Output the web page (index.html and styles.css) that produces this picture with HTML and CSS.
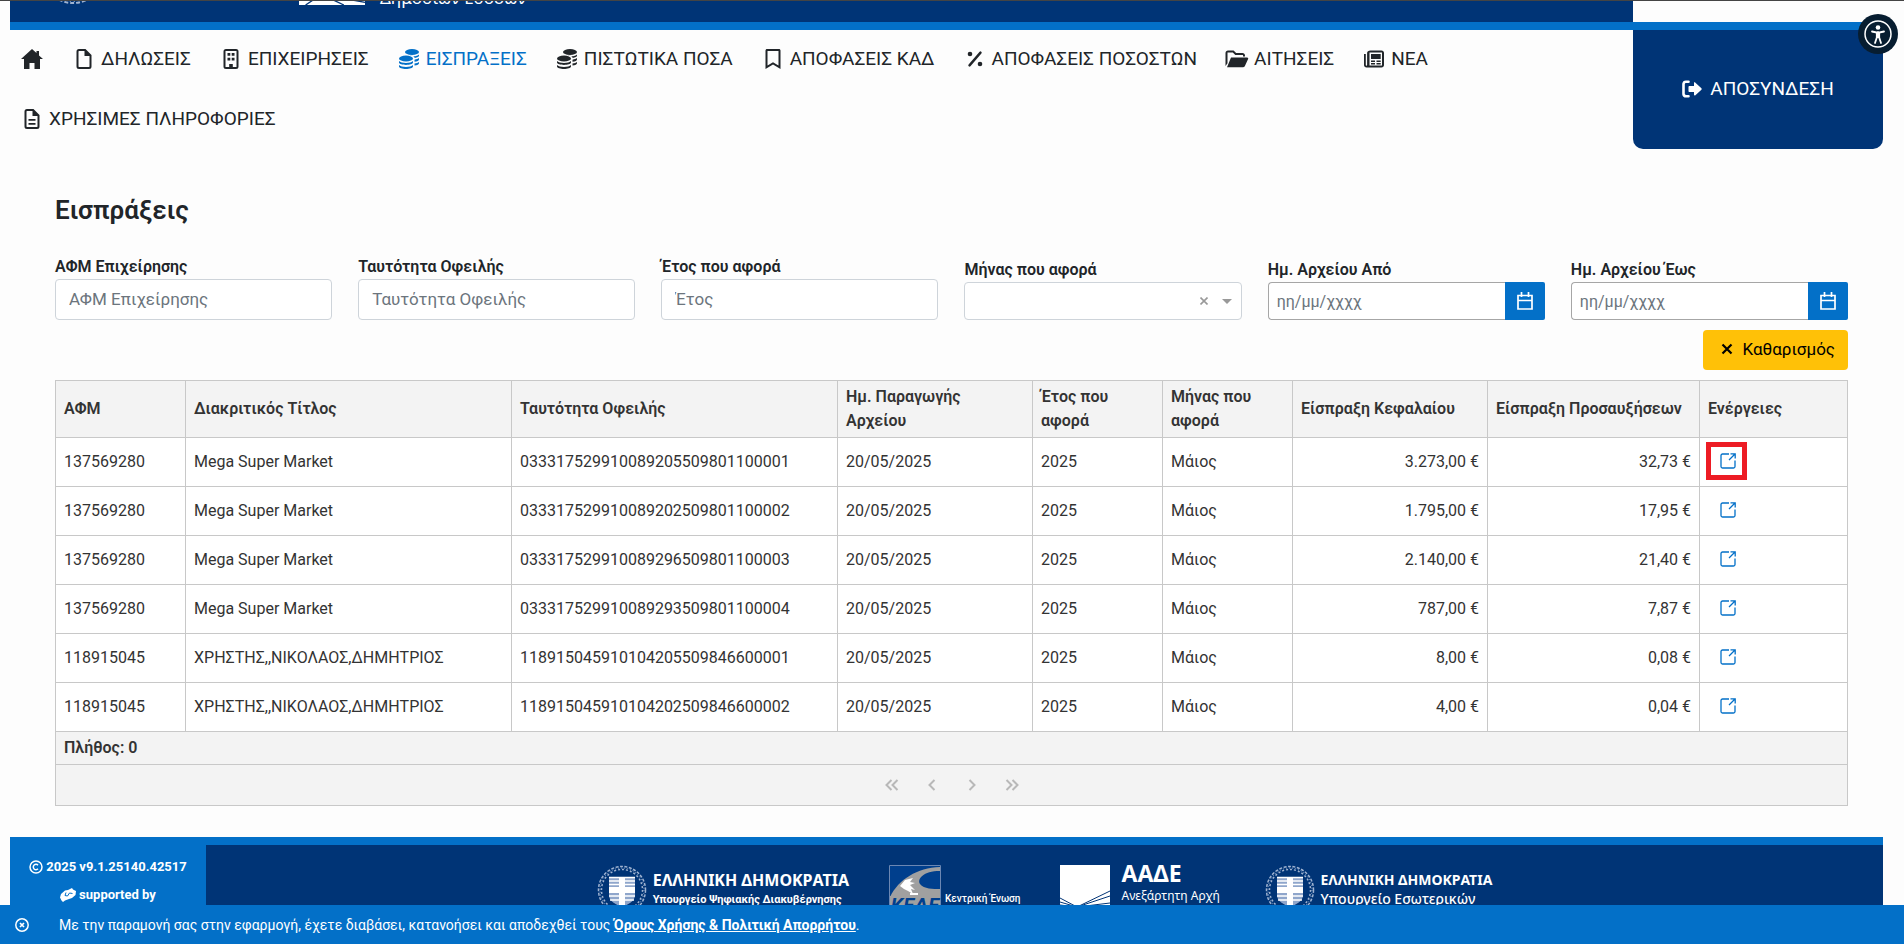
FILE: index.html
```
<!DOCTYPE html>
<html lang="el">
<head>
  <meta charset="utf-8">
  <title>Εισπράξεις</title>
  <link rel="stylesheet" href="styles.css">
</head>
<body>
  <!-- icons -->
  <svg class="sprite" width="0" height="0" aria-hidden="true">
    <symbol id="i-home" viewBox="0 0 22 20"><path d="M11 0 0 10h3v10h5.500v-6h5v6H19V10h3l-4-3.600V2h-2.500v2z"/></symbol>
    <symbol id="i-file" viewBox="0 0 15 20"><path fill-rule="evenodd" d="M2.500 0H9l6 6v11.500a2.500 2.500 0 0 1-2.500 2.500h-10A2.500 2.500 0 0 1 0 17.500v-15A2.500 2.500 0 0 1 2.500 0zM2 2.500v15c0 .3.200.5.500.5h10c.3 0 .5-.2.500-.5V7H8V2H2.500c-.3 0-.5.200-.5.500z"/></symbol>
    <symbol id="i-lines" viewBox="0 0 15 20"><path fill-rule="evenodd" d="M2.500 0H9l6 6v11.500a2.500 2.500 0 0 1-2.500 2.500h-10A2.500 2.500 0 0 1 0 17.500v-15A2.500 2.500 0 0 1 2.500 0zM2 2.500v15c0 .3.200.5.500.5h10c.3 0 .5-.2.500-.5V7H8V2H2.500c-.3 0-.5.200-.5.500zM4 10h7v1.800H4zM4 14h7v1.800H4z"/></symbol>
    <symbol id="i-building" viewBox="0 0 15 20"><path fill-rule="evenodd" d="M2.500 0h10A2.500 2.500 0 0 1 15 2.500v15a2.500 2.500 0 0 1-2.500 2.500h-10A2.500 2.500 0 0 1 0 17.500v-15A2.500 2.500 0 0 1 2.500 0zM2 2v16h3.700v-3h3.600v3H13V2zM4 4h2.800v2.800H4zM8.200 4H11v2.800H8.200zM4 8.800h2.800v2.800H4zM8.200 8.800H11v2.800H8.200z"/></symbol>
    <symbol id="i-coins" viewBox="0 0 20 20"><ellipse cx="13" cy="3" rx="7" ry="3"/><ellipse cx="7" cy="9.500" rx="7" ry="3"/><path d="M0 12c2 2.600 12 2.600 14 0v1.500c0 3.200-14 3.200-14 0zM0 16c2 2.600 12 2.600 14 0v1.500c0 3.300-14 3.300-14 0zM7 5.600c3 0 6 .7 7.300 1.700C17 7 19 6.500 20 5.400v1.400c0 1-1.700 1.900-4.200 2.200C15 7 11 5.800 7 5.600zM15.500 10.700c2-.3 3.600-.8 4.500-1.600v1.400c0 1-1.700 2-4.500 2.300zM15.500 14.500c2-.3 3.600-.8 4.500-1.600v1.400c0 1-1.700 2-4.500 2.300z"/></symbol>
    <symbol id="i-bookmark" viewBox="0 0 15 20"><path fill-rule="evenodd" d="M1.500 0h12c.8 0 1.500.700 1.500 1.500V20l-7.500-4.500L0 20V1.500C0 .7.700 0 1.500 0zM2 2v14.500l5.500-3.300 5.500 3.300V2z"/></symbol>
    <symbol id="i-percent" viewBox="0 0 15 20"><path d="M13 3.600 2 16.400" fill="none" stroke="currentColor" stroke-width="2.400" stroke-linecap="round"/><circle cx="2.500" cy="5" r="2.300"/><circle cx="12.500" cy="15" r="2.300"/></symbol>
    <symbol id="i-folder" viewBox="0 0 23 20"><path d="M5.500 8.500h16c1 0 1.500.8 1.100 1.600l-3.200 7c-.3.800-.9 1.100-1.700 1.100H1.500z"/><path fill-rule="evenodd" d="M2.500 1.500h5.600l2.500 2.500H17c1.400 0 2.500 1 2.500 2.500v1h-2V6H9.800L7.300 3.500H2v10.800L0 17V4c0-1.400 1.100-2.500 2.500-2.500z"/></symbol>
    <symbol id="i-news" viewBox="0 0 20 20"><path fill-rule="evenodd" d="M6.500 1.500h11C19 1.500 20 2.600 20 4v12c0 1.400-1 2.500-2.500 2.500h-15C1 18.500 0 17.400 0 16V5h1.800v11c0 .9 1.300.9 1.300 0V4c0-1.400 1.300-2.500 3.400-2.500zM5.500 3.500v13H18v-13zM7 5h9.700v5H7zM7 11.500h4V13H7zM12.500 11.500h4.200V13h-4.200zM7 14h4v1.500H7zM12.500 14h4.200v1.500h-4.200z"/></symbol>
    <symbol id="i-exit" viewBox="0 0 20 20"><path d="M6.500 2.800H4A2.500 2.500 0 0 0 1.500 5v10A2.500 2.500 0 0 0 4 17.200h2.500" fill="none" stroke="currentColor" stroke-width="2.600" stroke-linecap="round"/><path d="M12 3.500c.5-.3 1-.2 1.400.2l6 5.500c.5.500.5 1.100 0 1.600l-6 5.500c-.6.500-1.400.2-1.400-.5V13H7.500c-.6 0-1-.4-1-1V8c0-.6.400-1 1-1H12z"/></symbol>
    <symbol id="i-calendar" viewBox="0 0 16 18"><path d="M1 3.500h14V17H1zM1 8.500h14M4.500 0v5M11.500 0v5" fill="none" stroke="currentColor" stroke-width="1.700"/></symbol>
    <symbol id="i-open" viewBox="0 0 16 16"><path d="M9 1H2.500A1.500 1.500 0 0 0 1 2.500v11A1.500 1.500 0 0 0 2.500 15h11a1.500 1.500 0 0 0 1.500-1.500V7.500M10.500.8h4.700v4.700M15 1 9 7" fill="none" stroke="currentColor" stroke-width="1.300"/></symbol>
    <symbol id="i-emblem" viewBox="0 0 50 50">
      <g fill="none" stroke="#9fb3d1" stroke-width="1.500"><circle cx="25" cy="25" r="23.500" stroke-dasharray="3 1.500"/><circle cx="25" cy="25" r="20.500" stroke-dasharray="2 2"/><circle cx="25" cy="25" r="22" stroke-width="1" stroke-dasharray="1 2"/></g>
      <path d="M12 12h26v18c0 7-8 9-13 13-5-4-13-6-13-13z" fill="#8fa6cb"/>
      <path d="M12 12.500h26M12 16h26M12 19.500h26M12 31h26M13 35h24" stroke="#fff" stroke-width="1.300"/>
      <path d="M22 12h6v10h10v6H28v14l-3 2-3-2V28H12v-6h10z" fill="#fff"/>
    </symbol>
    <symbol id="i-aade" viewBox="0 0 50 50"><path d="M0 0h50v50H0z" fill="#fff"/><path d="M0 33 17 42 50 26M0 37l17 5 33-11M0 40l17 2 33-4M17 42 5 50M17 42l17 8M17 42l33 6" fill="none" stroke="#003476" stroke-width="1"/></symbol>
  </svg>

  <header class="header">
    <div class="header-top">
      <svg class="top-emblem"><use href="#i-emblem"/></svg>
      <svg class="top-aade"><use href="#i-aade"/></svg>
      <span class="top-text">Δημοσίων Εσόδων</span>
    </div>
    <div class="header-main">
      <nav class="menu">
        <a href="#" aria-label="Αρχική"><svg><use href="#i-home"/></svg></a>
        <a href="#"><svg><use href="#i-file"/></svg>ΔΗΛΩΣΕΙΣ</a>
        <a href="#"><svg><use href="#i-building"/></svg>ΕΠΙΧΕΙΡΗΣΕΙΣ</a>
        <a href="#" class="active"><svg><use href="#i-coins"/></svg>ΕΙΣΠΡΑΞΕΙΣ</a>
        <a href="#"><svg><use href="#i-coins"/></svg>ΠΙΣΤΩΤΙΚΑ ΠΟΣΑ</a>
        <a href="#"><svg><use href="#i-bookmark"/></svg>ΑΠΟΦΑΣΕΙΣ ΚΑΔ</a>
        <a href="#"><svg><use href="#i-percent"/></svg>ΑΠΟΦΑΣΕΙΣ ΠΟΣΟΣΤΩΝ</a>
        <a href="#"><svg><use href="#i-folder"/></svg>ΑΙΤΗΣΕΙΣ</a>
        <a href="#"><svg><use href="#i-news"/></svg>ΝΕΑ</a>
        <a href="#"><svg><use href="#i-lines"/></svg>ΧΡΗΣΙΜΕΣ ΠΛΗΡΟΦΟΡΙΕΣ</a>
      </nav>
      <a href="#" class="logout"><svg><use href="#i-exit"/></svg>ΑΠΟΣΥΝΔΕΣΗ</a>
    </div>
  </header>

  <button class="access" type="button" aria-label="Προσβασιμότητα">
    <svg viewBox="0 0 40 40"><circle cx="20" cy="20" r="13" fill="none" stroke="#fff" stroke-width="1.500"/><circle cx="20" cy="13.500" r="2.300" fill="#fff"/><path d="M14 17.500l4.500 1h3l4.500-1M20 18v5M18.800 19v4.500L17 29M21.200 19v4.500L23 29" fill="none" stroke="#fff" stroke-width="1.800" stroke-linecap="round"/></svg>
  </button>

  <main class="content">
    <h1>Εισπράξεις</h1>
    <form class="filters">
      <div class="field">
        <label for="afm">ΑΦΜ Επιχείρησης</label>
        <input id="afm" type="text" placeholder="ΑΦΜ Επιχείρησης">
      </div>
      <div class="field">
        <label for="debt">Ταυτότητα Οφειλής</label>
        <input id="debt" type="text" placeholder="Ταυτότητα Οφειλής">
      </div>
      <div class="field">
        <label for="year">Έτος που αφορά</label>
        <input id="year" type="text" placeholder="Έτος">
      </div>
      <div class="field">
        <label for="month">Μήνας που αφορά</label>
        <div class="select">
          <select id="month"><option></option><option>Μάιος</option></select>
          <span class="select-icons"><svg width="8" height="8" viewBox="0 0 8 8"><path d="M.5.5l7 7M7.500.5l-7 7" stroke="#999" stroke-width="1.600"/></svg><svg width="10" height="5" viewBox="0 0 10 5"><path d="M0 0h10L5 5z" fill="#999"/></svg></span>
        </div>
      </div>
      <div class="field">
        <label for="from">Ημ. Αρχείου Από</label>
        <div class="date">
          <input id="from" type="text" placeholder="ηη/μμ/χχχχ">
          <button type="button" aria-label="Ημερολόγιο"><svg><use href="#i-calendar"/></svg></button>
        </div>
      </div>
      <div class="field">
        <label for="to">Ημ. Αρχείου Έως</label>
        <div class="date">
          <input id="to" type="text" placeholder="ηη/μμ/χχχχ">
          <button type="button" aria-label="Ημερολόγιο"><svg><use href="#i-calendar"/></svg></button>
        </div>
      </div>
      <button class="clear" type="reset"><svg viewBox="0 0 12 12"><path d="M1.500 1.500l9 9M10.500 1.500l-9 9" stroke="#000" stroke-width="2.200"/></svg>Καθαρισμός</button>
    </form>

    <table class="grid">
      <colgroup>
        <col class="c-afm"><col class="c-title"><col class="c-title"><col class="c-date"><col class="c-afm"><col class="c-afm"><col class="c-date"><col class="c-extra"><col class="c-act">
      </colgroup>
      <thead>
        <tr>
          <th>ΑΦΜ</th>
          <th>Διακριτικός Τίτλος</th>
          <th>Ταυτότητα Οφειλής</th>
          <th>Ημ. Παραγωγής Αρχείου</th>
          <th>Έτος που αφορά</th>
          <th>Μήνας που αφορά</th>
          <th>Είσπραξη Κεφαλαίου</th>
          <th>Είσπραξη Προσαυξήσεων</th>
          <th>Ενέργειες</th>
        </tr>
      </thead>
      <tbody>
        <tr>
          <td>137569280</td><td>Mega Super Market</td><td>033317529910089205509801100001</td><td>20/05/2025</td><td>2025</td><td>Μάιος</td><td class="num">3.273,00 €</td><td class="num">32,73 €</td>
          <td class="act"><a href="#" class="marked" aria-label="Προβολή"><svg><use href="#i-open"/></svg></a></td>
        </tr>
        <tr>
          <td>137569280</td><td>Mega Super Market</td><td>033317529910089202509801100002</td><td>20/05/2025</td><td>2025</td><td>Μάιος</td><td class="num">1.795,00 €</td><td class="num">17,95 €</td>
          <td class="act"><a href="#" aria-label="Προβολή"><svg><use href="#i-open"/></svg></a></td>
        </tr>
        <tr>
          <td>137569280</td><td>Mega Super Market</td><td>033317529910089296509801100003</td><td>20/05/2025</td><td>2025</td><td>Μάιος</td><td class="num">2.140,00 €</td><td class="num">21,40 €</td>
          <td class="act"><a href="#" aria-label="Προβολή"><svg><use href="#i-open"/></svg></a></td>
        </tr>
        <tr>
          <td>137569280</td><td>Mega Super Market</td><td>033317529910089293509801100004</td><td>20/05/2025</td><td>2025</td><td>Μάιος</td><td class="num">787,00 €</td><td class="num">7,87 €</td>
          <td class="act"><a href="#" aria-label="Προβολή"><svg><use href="#i-open"/></svg></a></td>
        </tr>
        <tr>
          <td>118915045</td><td>ΧΡΗΣΤΗΣ,,ΝΙΚΟΛΑΟΣ,ΔΗΜΗΤΡΙΟΣ</td><td>118915045910104205509846600001</td><td>20/05/2025</td><td>2025</td><td>Μάιος</td><td class="num">8,00 €</td><td class="num">0,08 €</td>
          <td class="act"><a href="#" aria-label="Προβολή"><svg><use href="#i-open"/></svg></a></td>
        </tr>
        <tr>
          <td>118915045</td><td>ΧΡΗΣΤΗΣ,,ΝΙΚΟΛΑΟΣ,ΔΗΜΗΤΡΙΟΣ</td><td>118915045910104202509846600002</td><td>20/05/2025</td><td>2025</td><td>Μάιος</td><td class="num">4,00 €</td><td class="num">0,04 €</td>
          <td class="act"><a href="#" aria-label="Προβολή"><svg><use href="#i-open"/></svg></a></td>
        </tr>
      </tbody>
      <tfoot>
        <tr><td colspan="9">Πλήθος: 0</td></tr>
      </tfoot>
    </table>
    <div class="pager">
      <button type="button" disabled aria-label="Πρώτη"><svg viewBox="0 0 14 12"><path d="M6.500 1l-5 5 5 5M12.500 1l-5 5 5 5"/></svg></button>
      <button type="button" disabled aria-label="Προηγούμενη"><svg viewBox="0 0 14 12"><path d="M9.500 1l-5 5 5 5"/></svg></button>
      <button type="button" disabled aria-label="Επόμενη"><svg viewBox="0 0 14 12"><path d="M4.500 1l5 5-5 5"/></svg></button>
      <button type="button" disabled aria-label="Τελευταία"><svg viewBox="0 0 14 12"><path d="M1.500 1l5 5-5 5M7.500 1l5 5-5 5"/></svg></button>
    </div>
  </main>

  <footer class="footer">
    <div class="version">
      <p><svg viewBox="0 0 14 14"><circle cx="7" cy="7" r="6" fill="none" stroke="#fff" stroke-width="1.500"/><path d="M9 5.200a2.700 2.700 0 1 0 0 3.600" fill="none" stroke="#fff" stroke-width="1.500"/></svg>2025 v9.1.25140.42517</p>
      <p><svg class="hands" viewBox="0 0 16 14"><path d="M0 9.500 1 6l4-3.500 3-.5 4-2 1 1.500 3 1.500-.5 4L12 10l-3 1-4 1.500-2 1.500-1.500-1.500z" fill="#fff"/><path d="M6 4.500 5 7.500l2.500.5 2-3 3 .5" fill="none" stroke="#0370c8"/></svg>supported by</p>
    </div>
    <div class="logos">
      <div class="logo">
        <svg class="emblem"><use href="#i-emblem"/></svg>
        <p class="gov"><strong>ΕΛΛΗΝΙΚΗ ΔΗΜΟΚΡΑΤΙΑ</strong><span>Υπουργείο Ψηφιακής Διακυβέρνησης</span></p>
      </div>
      <div class="logo">
        <svg class="kede" viewBox="0 0 52 52"><path d="M.5.500h51v51H.5z" fill="#003f8d" stroke="#6b87b3"/><path d="M1 32C10 14 28 3 51 2v4C34 6 28 14 31 19c4 5 13 5 20 5v9H1z" fill="#a0a0a0"/><path d="M11 21l5-6 8-2-3 4 5 1-5 2 5 5-4-1 2 5-5-3-4-2zM21 28h8v2h-8z" fill="#fff"/><path d="M1 31h50v20H1z" fill="#a0a0a0"/><text x="26" y="47" text-anchor="middle" class="kede-text">ΚΕΔΕ</text></svg>
        <p class="small">Κεντρική Ένωση<br>Δήμων Ελλάδας</p>
      </div>
      <div class="logo">
        <svg class="aade"><use href="#i-aade"/></svg>
        <p class="aade-name"><strong>ΑΑΔΕ</strong><span>Ανεξάρτητη Αρχή<br>Δημοσίων Εσόδων</span></p>
      </div>
      <div class="logo">
        <svg class="emblem"><use href="#i-emblem"/></svg>
        <p class="gov interior"><strong>ΕΛΛΗΝΙΚΗ ΔΗΜΟΚΡΑΤΙΑ</strong><span>Υπουργείο Εσωτερικών</span></p>
      </div>
    </div>
  </footer>

  <div class="cookies">
    <button type="button" aria-label="Κλείσιμο"><svg viewBox="0 0 14 14"><circle cx="7" cy="7" r="6.200" fill="none" stroke="#fff" stroke-width="1.500"/><path d="M5 5l4 4M9 5l-4 4" stroke="#fff" stroke-width="1.700"/></svg></button>
    <p>Με την παραμονή σας στην εφαρμογή, έχετε διαβάσει, κατανοήσει και αποδεχθεί τους <a href="#">Όρους Χρήσης &amp; Πολιτική Απορρήτου</a>.</p>
  </div>
</body>
</html>
```
FILE: styles.css
```
* {
  box-sizing: border-box;
}
body {
  margin: 0;
  border-top: 1px solid #444;
  background: #fdfdfd;
  color: #212529;
  font: 16px/24px Roboto, "Noto Sans", sans-serif;
  height: 100vh;
  overflow: hidden;
}
p, h1 {
  margin: 0;
}
svg {
  flex: none;
  fill: currentColor;
}
button, input, select {
  font: inherit;
}
.sprite {
  position: absolute;
}

/* header */
.header {
  margin: 0 21px 0 10px;
}
.header-top {
  display: flex;
  align-items: flex-end;
  height: 21px;
  margin-right: 250px;
  padding: 0 0 17px 30px;
  background: #003476;
  color: #fff;
}
.top-emblem {
  width: 66px;
  height: 66px;
}
.top-aade {
  width: 66px;
  height: 66px;
  margin-left: 193px;
}
.top-text {
  margin-left: 15px;
  font: 17px/14px "Noto Sans", sans-serif;
}
.header-main {
  display: flex;
  justify-content: space-between;
  border-top: 8px solid #0370c8;
}
.menu {
  display: flex;
  flex-wrap: wrap;
  flex: 1;
}
.menu a {
  display: flex;
  align-items: center;
  gap: 5px;
  height: 59px;
  padding: 0 18px 1px 10px;
  color: #212529;
  font-size: 19px;
  text-decoration: none;
}
.menu a.active {
  color: #0370c8;
}
.menu svg {
  width: 24px;
  height: 20px;
}
.logout {
  display: flex;
  align-items: center;
  justify-content: center;
  gap: 8px;
  width: 250px;
  height: 119px;
  padding-bottom: 2px;
  border-radius: 0 0 10px 10px;
  background: #003476;
  color: #fff;
  font-size: 19px;
  text-decoration: none;
}
.logout svg {
  width: 20px;
  height: 20px;
}
.access {
  position: fixed;
  top: 14px;
  right: 6px;
  width: 40px;
  height: 40px;
  padding: 0;
  border: 0;
  border-radius: 50%;
  background: #071d30;
}
.access svg {
  display: block;
}

/* filters */
.content {
  padding: 45px 56px 0 55px;
}
h1 {
  font-size: 26px;
  font-weight: 600;
  line-height: 32px;
}
.filters {
  display: grid;
  grid-template-columns: repeat(6, 1fr);
  align-items: end;
  gap: 10px 26px;
  margin: 29px 0 10px;
}
.field {
  min-width: 0;
}
.field label {
  display: block;
  font-weight: 600;
}
.field input {
  display: block;
  width: 100%;
  height: 41px;
  padding: 0 13px 2px;
  border: 1px solid #ced4da;
  border-radius: 4px;
  background: #fff;
  font-size: 17px;
}
.field input::placeholder {
  color: #6c757d;
}
.select {
  position: relative;
}
.select select {
  display: block;
  width: 100%;
  height: 38px;
  border: 1px solid #ced4da;
  border-radius: 4px;
  background: #fff;
  appearance: none;
}
.select-icons {
  position: absolute;
  top: 0;
  right: 10px;
  display: flex;
  align-items: center;
  gap: 14px;
  height: 38px;
  pointer-events: none;
}
.date {
  display: flex;
}
.date input {
  flex: 1;
  min-width: 0;
  height: 38px;
  padding: 0 8px;
  border-color: #a6a6a6;
  border-right: 0;
  border-radius: 4px 0 0 4px;
  font-size: 16px;
}
.date button {
  display: flex;
  align-items: center;
  justify-content: center;
  width: 40px;
  height: 38px;
  border: 0;
  border-radius: 0 2px 2px 0;
  background: #0370c8;
  color: #fff;
}
.date svg {
  width: 16px;
  height: 18px;
}
.clear {
  display: flex;
  align-items: center;
  grid-column: 6;
  justify-self: end;
  gap: 9px;
  height: 40px;
  padding: 0 13px 2px 18px;
  border: 0;
  border-radius: 4px;
  background: #ffc107;
  color: #000;
  font-size: 17px;
}
.clear svg {
  width: 12px;
  height: 12px;
}

/* table */
.grid {
  width: 100%;
  border-collapse: collapse;
  table-layout: fixed;
  color: #333;
}
.c-afm { width: 130px; }
.c-title { width: 326px; }
.c-date { width: 195px; }
.c-extra { width: 212px; }
.c-act { width: 148px; }
.grid th, .grid td {
  height: 49px;
  padding: 0 8px;
  border: 1px solid #c8c8c8;
  background: #fff;
  text-align: left;
}
.grid th {
  height: 57px;
  background: #f3f3f3;
  font-weight: 600;
}
.grid .num {
  text-align: right;
}
.grid .act {
  padding: 0 6px 2px;
}
.grid .act a {
  display: flex;
  align-items: center;
  justify-content: center;
  width: 41px;
  height: 38px;
  padding-left: 3px;
  color: #0370c8;
}
.grid .act .marked {
  border: 5px solid #ed1c24;
}
.act svg {
  width: 16px;
  height: 16px;
}
.grid tfoot td {
  height: 33px;
  background: #f3f3f3;
  font-weight: 600;
}
.pager {
  display: flex;
  align-items: center;
  justify-content: center;
  height: 41px;
  padding-top: 2px;
  border: 1px solid #c8c8c8;
  border-top: 0;
  background: #f3f3f3;
}
.pager button {
  width: 40px;
  height: 36px;
  padding: 0;
  border: 0;
  background: none;
}
.pager svg {
  width: 14px;
  height: 12px;
  fill: none;
  stroke: #b8b8b8;
  stroke-width: 2;
}

/* footer */
.footer {
  display: flex;
  height: 140px;
  margin: 31px 21px 0 10px;
  border-top: 8px solid #0370c8;
  background: #003476;
  color: #fff;
}
.version {
  width: 196px;
  padding-top: 8px;
  background: #0370c8;
  font-size: 13px;
  font-weight: 700;
}
.version p {
  display: flex;
  align-items: center;
  justify-content: center;
  gap: 3px;
  height: 28px;
}
.version svg {
  width: 14px;
  height: 14px;
}
.version .hands {
  width: 16px;
}
.logos {
  display: flex;
  justify-content: center;
  flex: 1;
  gap: 40px;
  padding-top: 20px;
}
.logo {
  display: flex;
}
.logo span {
  display: block;
}
.emblem, .aade {
  width: 50px;
  height: 50px;
}
.gov {
  padding: 5px 0 0 6px;
  font: 12px/18px "Noto Sans", sans-serif;
}
.gov strong {
  font-size: 16px;
  line-height: 20px;
}
.gov span {
  font: 700 11px/18px Roboto, sans-serif;
}
.interior strong {
  font-size: 14px;
}
.interior span {
  font: 500 14px/18px "Noto Sans", sans-serif;
}
.kede {
  width: 52px;
  height: 52px;
}
.kede-text {
  fill: #003f8d;
  font: italic 700 20px Roboto, sans-serif;
}
.small {
  padding: 27px 0 0 4px;
  font: 500 10px/14px Roboto, sans-serif;
}
.aade-name {
  padding-left: 11px;
  font: 12px/15px "Noto Sans", sans-serif;
}
.aade-name strong {
  font-size: 23px;
  line-height: 16px;
}
.aade-name span {
  padding-top: 3px;
}

/* cookie bar */
.cookies {
  position: fixed;
  right: 0;
  bottom: 0;
  left: 0;
  display: flex;
  align-items: center;
  gap: 30px;
  height: 39px;
  padding-left: 15px;
  background: #0370c8;
  color: #fff;
  font-size: 14px;
}
.cookies button {
  width: 14px;
  height: 14px;
  padding: 0;
  border: 0;
  background: none;
}
.cookies svg {
  display: block;
}
.cookies a {
  color: #fff;
  font-weight: 700;
}
```
